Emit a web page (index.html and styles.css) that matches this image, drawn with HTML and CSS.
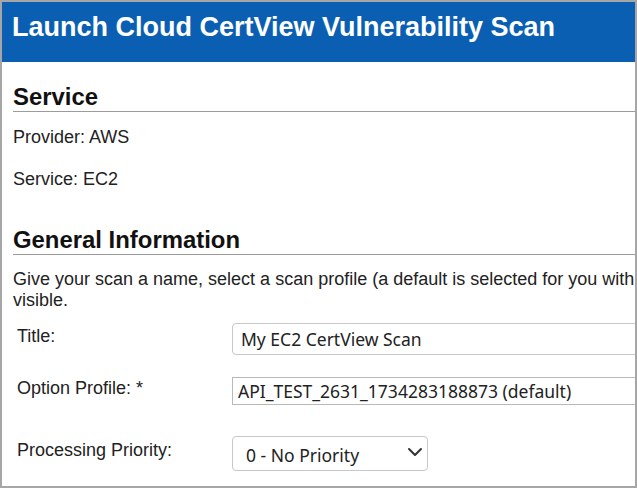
FILE: index.html
```html
<!DOCTYPE html>
<html lang="en">
<head>
<meta charset="utf-8">
<title>Launch Cloud CertView Vulnerability Scan</title>
<link rel="stylesheet" href="styles.css">
</head>
<body>
<div class="frame">
  <div class="header">
    <h1 class="header-title">Launch Cloud CertView Vulnerability Scan</h1>
  </div>
  <div class="content">
    <h2 class="section-title">Service</h2>
    <p class="info info-first">Provider: AWS</p>
    <p class="info info-next">Service: EC2</p>

    <h2 class="section-title section-gap">General Information</h2>
    <p class="desc"><span class="desc-line">Give your scan a name, select a scan profile (a default is selected for you with</span><br>visible.</p>

    <div class="row row-title">
      <label class="label label-title" for="title">Title:</label>
      <input class="field field-title" id="title" type="text" value="My EC2 CertView Scan">
    </div>
    <div class="row row-profile">
      <label class="label label-profile" for="profile">Option Profile: *</label>
      <input class="field field-profile" id="profile" type="text" value="API_TEST_2631_1734283188873 (default)">
    </div>
    <div class="row row-priority">
      <label class="label label-priority" for="priority">Processing Priority:</label>
      <div class="select-wrap">
        <select class="field field-select" id="priority">
          <option>0 - No Priority</option>
        </select>
        <svg class="chevron" width="16" height="10" viewBox="0 0 16 10" aria-hidden="true">
          <path d="M2 2 L8 8 L14 2" fill="none" stroke="#333" stroke-width="2" stroke-linecap="round" stroke-linejoin="round"/>
        </svg>
      </div>
    </div>
  </div>
</div>
</body>
</html>
```
FILE: styles.css
```css
html, body {
  margin: 0;
  padding: 0;
  background: #ffffff;
}

.frame {
  width: 637px;
  height: 488px;
  box-sizing: border-box;
  border: 2px solid #a6a6a6;
  overflow: hidden;
  font-family: "Liberation Sans", Arial, sans-serif;
  color: #222222;
}

.header {
  height: 60px;
  box-sizing: border-box;
  padding: 10px 0 0 10px;
  background: #0b5fb3;
}

.header-title {
  margin: 0;
  font-size: 27px;
  line-height: 31px;
  font-weight: bold;
  color: #ffffff;
  white-space: nowrap;
}

.content {
  padding: 21px 0 0 11px;
}

.section-title {
  margin: 0;
  font-size: 23.9px;
  line-height: 27px;
  font-weight: bold;
  color: #111111;
  padding-bottom: 1px;
  border-bottom: 1px solid #9c9c9c;
  white-space: nowrap;
}

.section-gap {
  margin-top: 37px;
}

.info {
  margin: 0;
  font-size: 18px;
  line-height: 20px;
}

.info-first {
  margin-top: 15px;
}

.info-next {
  margin-top: 22px;
}

.desc {
  margin: 14px 0 0 0;
  font-size: 18px;
  line-height: 21px;
}

.desc-line {
  white-space: nowrap;
}

.row {
  display: flex;
  align-items: flex-start;
  padding-left: 4px;
}

.row-title {
  margin-top: 12px;
}

.row-profile {
  margin-top: 22px;
}

.row-priority {
  margin-top: 31px;
}

.label {
  flex: 0 0 215px;
  font-size: 18px;
  line-height: 20px;
  color: #222222;
}

.label-title {
  margin-top: 3px;
}

.label-profile {
  margin-top: 1px;
}

.label-priority {
  margin-top: 4px;
}

.field {
  box-sizing: border-box;
  margin: 0;
  font-family: "Noto Sans", "Open Sans", sans-serif;
  font-size: 17.5px;
  color: #222222;
  background: #ffffff;
  outline: none;
}

.field-title {
  flex: 0 0 480px;
  height: 32px;
  padding: 0 8px;
  border: 1px solid #c8c8c8;
  border-radius: 4px;
}

.field-profile {
  flex: 0 0 480px;
  height: 28px;
  padding: 0 5px;
  border: 1px solid #b9b9b9;
  border-radius: 0;
}

.select-wrap {
  position: relative;
  width: 196px;
  height: 35px;
}

.field-select {
  -webkit-appearance: none;
  appearance: none;
  width: 196px;
  height: 35px;
  padding: 2px 0 0 13px;
  border: 1px solid #c8c8c8;
  border-radius: 4px;
}

.chevron {
  position: absolute;
  left: 175px;
  top: 11px;
  pointer-events: none;
}
```
